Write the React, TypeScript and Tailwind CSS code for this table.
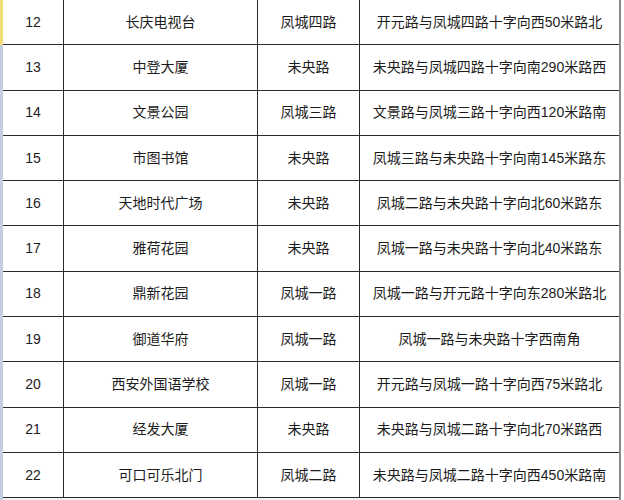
import React from "react";

const rows: [string, string, string, string][] = [
  ["12", "长庆电视台", "凤城四路", "开元路与凤城四路十字向西50米路北"],
  ["13", "中登大厦", "未央路", "未央路与凤城四路十字向南290米路西"],
  ["14", "文景公园", "凤城三路", "文景路与凤城三路十字向西120米路南"],
  ["15", "市图书馆", "未央路", "凤城三路与未央路十字向南145米路东"],
  ["16", "天地时代广场", "未央路", "凤城二路与未央路十字向北60米路东"],
  ["17", "雅荷花园", "未央路", "凤城一路与未央路十字向北40米路东"],
  ["18", "鼎新花园", "凤城一路", "凤城一路与开元路十字向东280米路北"],
  ["19", "御道华府", "凤城一路", "凤城一路与未央路十字西南角"],
  ["20", "西安外国语学校", "凤城一路", "开元路与凤城一路十字向西75米路北"],
  ["21", "经发大厦", "未央路", "未央路与凤城二路十字向北70米路西"],
  ["22", "可口可乐北门", "凤城二路", "未央路与凤城二路十字向西450米路南"],
];

export default function App() {
  return (
    <div
      className="w-[624px] h-[500px] overflow-hidden bg-white flex text-[14px] text-[#1c1c1c]"
      style={{ fontFamily: '"Liberation Sans", "Noto Sans CJK SC", sans-serif' }}
    >
      <div className="w-[3px] flex flex-col">
        <div className="h-[45px] bg-[#f3df7a]" />
        <div className="flex-1 bg-[#c3cde0]" />
      </div>
      <div className="w-[618px] flex flex-col border-r-2 border-[#8a8a8a]">
        {rows.map((r) => (
          <div
            key={r[0]}
            className="h-[45.3px] shrink-0 flex border-b border-[#2a2a2a]"
          >
            <div className="w-[61px] flex items-center justify-center border-r border-[#2a2a2a]">
              {r[0]}
            </div>
            <div className="w-[194px] flex items-center justify-center border-r border-[#2a2a2a]">
              {r[1]}
            </div>
            <div className="w-[102px] flex items-center justify-center border-r border-[#2a2a2a]">
              {r[2]}
            </div>
            <div className="flex-1 flex items-center justify-center">
              {r[3]}
            </div>
          </div>
        ))}
        <div className="flex-1 bg-[#f2f2f2]" />
      </div>
      <div className="flex-1 bg-white" />
    </div>
  );
}
